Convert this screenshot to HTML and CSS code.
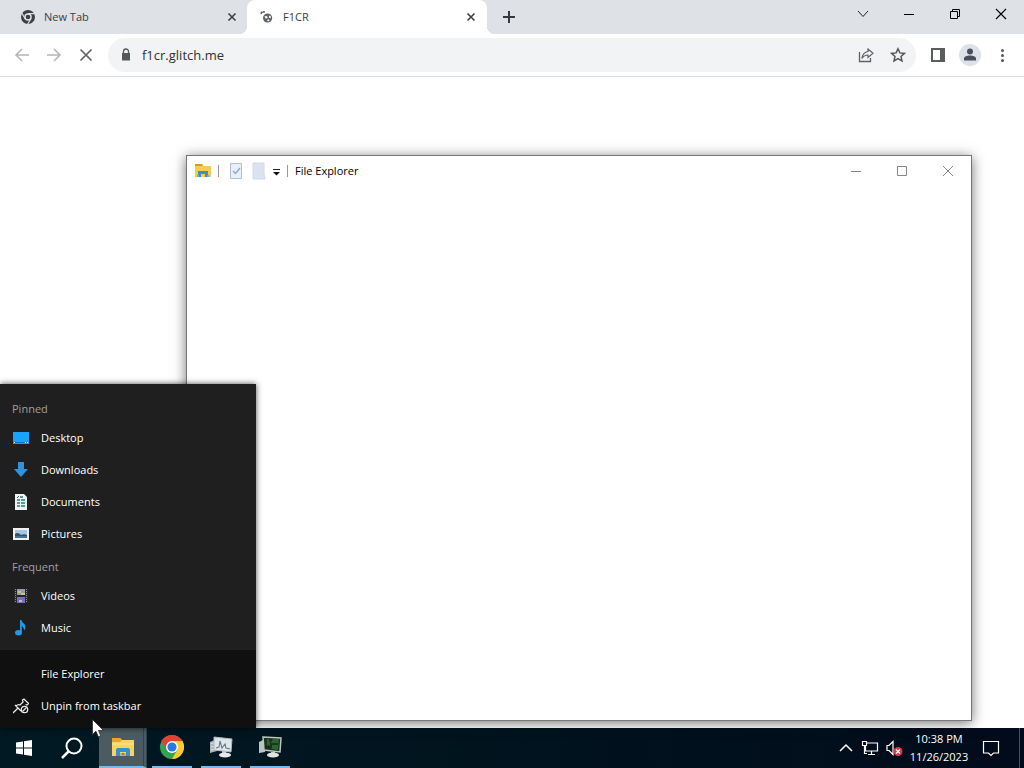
FILE: index.html
```html
<!DOCTYPE html>
<html lang="en">
<head>
<meta charset="utf-8">
<title>F1CR</title>
<link rel="stylesheet" href="styles.css">
</head>
<body>
<div class="screen">
  <main class="desktop">
    <section class="browser" aria-label="Browser">
      <div class="tabstrip">
        <div class="tab">
          <svg class="icon16" viewBox="0 0 16 16"><circle cx="8" cy="8" r="7" fill="#3c4043"/><circle cx="8" cy="8" r="3.800" fill="#dee1e6"/><circle cx="8" cy="8" r="2.300" fill="#3c4043"/><path d="M8 4.600H14.600M5.100 9.700L1.800 4M10.900 9.700L7.600 15.200" stroke="#dee1e6" stroke-width="1.200"/></svg>
          <span class="tab-title">New Tab</span>
          <button class="tab-close" aria-label="Close New Tab"><svg viewBox="0 0 16 16"><path d="M4.500 4.500l7 7M11.500 4.500l-7 7" stroke="#3c4043" stroke-width="1.600"/></svg></button>
        </div>
        <div class="tab active">
          <svg class="icon16" viewBox="0 0 16 16"><circle cx="8.600" cy="9" r="4.600" fill="#5f6368"/><path d="M5.500 7.500c1.500-1 2.500-.5 3 .5s-1 1.500-1.800 1.500zM10 6.500l2 1-.5 2-1.500-1zM8 11l2-.8.5 1.300-1.500 1z" fill="#fff"/><path d="M1.800 4.800l1.500-2M3.800 2.800h2" fill="none" stroke="#5f6368" stroke-width="1.700"/></svg>
          <span class="tab-title">F1CR</span>
          <button class="tab-close" aria-label="Close F1CR"><svg viewBox="0 0 16 16"><path d="M4.500 4.500l7 7M11.500 4.500l-7 7" stroke="#3c4043" stroke-width="1.600"/></svg></button>
        </div>
        <button class="new-tab" aria-label="New tab"><svg viewBox="0 0 16 16"><path d="M8 2v12M2 8h12" stroke="#35393c" stroke-width="2"/></svg></button>
        <div class="controls">
          <button aria-label="Search tabs"><svg viewBox="0 0 16 16"><path d="M3 5l5 5.500 5-5.500" fill="none" stroke="#222"/></svg></button>
          <button aria-label="Minimize"><svg viewBox="0 0 16 16"><path d="M3 8.500h10" stroke="#000"/></svg></button>
          <button aria-label="Restore"><svg viewBox="0 0 16 16"><path d="M3.500 5.500h7v7h-7zM5.500 5V3.500h7v7H11" fill="none" stroke="#000"/></svg></button>
          <button aria-label="Close"><svg viewBox="0 0 16 16"><path d="M3 3l10 10M13 3L3 13" stroke="#000" stroke-width="1.200"/></svg></button>
        </div>
      </div>
      <div class="toolbar">
        <button class="tool" aria-label="Back"><svg viewBox="0 0 16 16"><path d="M15 8H2M8 2L2 8l6 6" fill="none" stroke="#b5b7b9" stroke-width="1.600"/></svg></button>
        <button class="tool" aria-label="Forward"><svg viewBox="0 0 16 16"><path d="M1 8h13M8 2l6 6-6 6" fill="none" stroke="#b5b7b9" stroke-width="1.600"/></svg></button>
        <button class="tool" aria-label="Stop"><svg viewBox="0 0 16 16"><path d="M2.500 2.500l11 11M13.500 2.500l-11 11" stroke="#606366" stroke-width="1.700"/></svg></button>
        <div class="omnibox">
          <svg class="icon16" viewBox="0 0 16 16"><path d="M4 6h8v7.500H4z" fill="#55585b"/><path d="M5.500 7V4.500a2.500 2.500 0 0 1 5 0V7" fill="none" stroke="#55585b" stroke-width="1.300"/></svg>
          <input class="address" type="text" value="f1cr.glitch.me" aria-label="Address">
          <button class="tool" aria-label="Share"><svg viewBox="0 0 16 16"><path d="M1.500 5v9.500h11V11" fill="none" stroke="#5f6368" stroke-width="1.300"/><path d="M10 2l5 4.300-5 4.200V8C7.500 8 5.500 9 4 11.500 4.500 7.500 6.500 5 10 4.500z" fill="none" stroke="#5f6368" stroke-width="1.200"/></svg></button>
          <button class="tool" aria-label="Bookmark"><svg viewBox="0 0 16 16"><path d="M8 1.800l1.900 4.100 4.500.5-3.400 3 1 4.500L8 11.600l-4 2.300 1-4.500-3.400-3 4.500-.5z" fill="none" stroke="#55585b" stroke-width="1.500"/></svg></button>
        </div>
        <button class="tool side" aria-label="Side panel"><svg viewBox="0 0 16 16"><path d="M1 1h14v14H1z" fill="#5a5c5e"/><path d="M3 3h7v10H3z" fill="#fff"/></svg></button>
        <button class="tool profile" aria-label="Profile"><svg viewBox="0 0 22 22"><circle cx="11" cy="11" r="11" fill="#dde1e8"/><circle cx="11" cy="7.600" r="3" fill="#494e5a"/><path d="M5 16.500v-2c0-2 3-3 6-3s6 1 6 3v2z" fill="#494e5a"/></svg></button>
        <button class="tool" aria-label="More"><svg viewBox="0 0 16 16"><g fill="#55585b"><circle cx="8.500" cy="3.500" r="1.500"/><circle cx="8.500" cy="8.500" r="1.500"/><circle cx="8.500" cy="13.500" r="1.500"/></g></svg></button>
      </div>
    </section>

    <section class="explorer" aria-label="File Explorer">
      <div class="titlebar">
        <svg class="icon18" viewBox="0 0 18 18"><path d="M1 2h7l1 2h8v11H1z" fill="#f7cc50"/><path d="M1 2h7l1 2H1z" fill="#d99a24"/><path d="M4 15V9h10v6h-3v-3H7v3z" fill="#3c8fc7"/><path d="M3 13h2v2H3zM13 13h2v2h-2z" fill="#58b4e5"/></svg>
        <i class="divider"></i>
        <button class="quick" aria-label="Properties"><svg viewBox="0 0 16 18"><path d="M2.500 1.500h11v15h-11z" fill="#e9eff7" stroke="#b4bfcc"/><path d="M5 9l2.500 2.500L12 6" fill="none" stroke="#8fabc8" stroke-width="1.500"/></svg></button>
        <button class="quick" aria-label="New folder"><svg viewBox="0 0 16 18"><path d="M2 1h11v11l1 5H2z" fill="#dbe3f1" stroke="#d0daea"/></svg></button>
        <button class="quick narrow" aria-label="Customize"><svg viewBox="0 0 8 18"><path d="M1 7.500h7" stroke="#222"/><path d="M1 10h7l-3.500 3.500z" fill="#111"/></svg></button>
        <i class="divider"></i>
        <h1 class="window-title">File Explorer</h1>
        <div class="controls gray">
          <button aria-label="Minimize window"><svg viewBox="0 0 16 16"><path d="M3 8.500h10" stroke="#888"/></svg></button>
          <button aria-label="Maximize window"><svg viewBox="0 0 16 16"><path d="M3.500 3.500h9v9h-9z" fill="none" stroke="#888"/></svg></button>
          <button aria-label="Close window"><svg viewBox="0 0 16 16"><path d="M3 3l10 10M13 3L3 13" stroke="#888"/></svg></button>
        </div>
      </div>
    </section>

    <nav class="jumplist" aria-label="File Explorer jump list">
      <div class="places">
        <h2>Pinned</h2>
        <button><svg viewBox="0 0 16 16"><path d="M0 2h16v12H0z" fill="#18a4fa"/><path d="M1 12.500h14" stroke="#0872c4"/><path d="M1 12h1v1H1zM12 12h1v1h-1zM14 12h1v1h-1z" fill="#fff"/></svg>Desktop</button>
        <button><svg viewBox="0 0 16 16"><path d="M5 0h6v7h4l-7 8-7-8h4z" fill="#2f93df"/></svg>Downloads</button>
        <button><svg viewBox="0 0 16 16"><path d="M2 0h9l3 3v13H2z" fill="#eef2f1"/><path d="M4 6h3M8 6h4M4 9h3M8 9h4M4 12h3M8 12h4M7 3h3" stroke="#237f82" stroke-width="1.300"/><path d="M4 4l2-2" stroke="#456"/></svg>Documents</button>
        <button><svg viewBox="0 0 16 16"><path d="M0 2h16v12H0z" fill="#eef2f5"/><path d="M2 4h12v8H2z" fill="#a7c7e4"/><path d="M2 8c2-2 4-1 6 1 2-1 4-1 6 0v3H2z" fill="#2f536f"/><path d="M2 11h12" stroke="#6d91b5"/></svg>Pictures</button>
        <h2>Frequent</h2>
        <button><svg viewBox="0 0 16 16"><path d="M1 1h14v14H1z" fill="#29292b"/><path d="M2.500 1v14M13.500 1v14" stroke="#888" stroke-dasharray="1 1"/><path d="M4 1h8v6H4z" fill="#969ab0"/><path d="M4 9h8v6H4z" fill="#746fbc"/><path d="M5 3h3v2H5zM8 5h4v2H8zM6 12h3v2H6z" fill="#c9c383"/><path d="M4 7.500h8" stroke="#222"/></svg>Videos</button>
        <button><svg viewBox="0 0 16 16"><ellipse cx="5.500" cy="12.700" rx="3.500" ry="2.700" fill="#1c9bea"/><path d="M7 0h1.500c0 3 4 3.500 4 7 0 1.500-.7 2.500-1.500 3.500 0-2.500-1-3.800-2.200-4.500v7H7z" fill="#1c9bea"/></svg>Music</button>
      </div>
      <div class="actions">
        <button><svg viewBox="0 0 16 16"></svg>File Explorer</button>
        <button><svg viewBox="0 0 16 16"><g fill="none" stroke="#e8e8e8" stroke-width="1.300"><path d="M0 15l5-5M2 7l6 6M3 8c1.500-1.500 3-1.500 4-1l3-3-.5-2L11 1l4.500 4.500L14 7l-1.500-.5"/><circle cx="11.500" cy="11.500" r="3.200"/><path d="M9.500 13.500l4-4"/></g></svg>Unpin from taskbar</button>
      </div>
    </nav>
  </main>

  <footer class="taskbar">
    <button class="system" aria-label="Start"><svg class="icon18" viewBox="0 0 18 18"><path d="M1 3.500L8 2.500v6H1zM9 2.300L17 1v7.500H9zM1 9.500h7v6l-7-1zM9 9.500h8V17l-8-1.200z" fill="#fff"/></svg></button>
    <button class="system" aria-label="Search"><svg class="icon24" viewBox="0 0 24 24"><circle cx="14" cy="10" r="7.500" fill="none" stroke="#fff" stroke-width="2"/><path d="M8.500 15.500L2 22" stroke="#fff" stroke-width="2.500"/></svg></button>
    <div class="apps">
      <button class="app current" aria-label="File Explorer"><svg class="icon24" viewBox="0 0 24 24"><path d="M1 3h8l2 2h12v16H1z" fill="#fad365"/><path d="M1 3h8l2 2-2 2H1z" fill="#e7a72c"/><path d="M1 8h22v2H1z" fill="#ffdd77"/><path d="M5 21v-6q0-2 2-2h10q2 0 2 2v6h-4v-4H9v4z" fill="#3791cd"/><path d="M9 18h6v3H9z" fill="#e6ad36"/><path d="M11 18h2v2h-2z" fill="#3791cd"/></svg></button>
      <button class="app" aria-label="Google Chrome"><svg class="icon24" viewBox="0 0 24 24"><circle cx="12" cy="12" r="12" fill="#32a350"/><path d="M1.600 6A12 12 0 0 1 22.400 6H12L6.800 15z" fill="#e34133"/><path d="M22.400 6A12 12 0 0 1 12 24l5.200-9L12 6z" fill="#fbca2f"/><circle cx="12" cy="12" r="6" fill="#fff"/><circle cx="12" cy="12" r="4.600" fill="#2879e8"/></svg></button>
      <button class="app" aria-label="System monitor"><svg class="icon24" viewBox="0 0 24 24"><path d="M1 7l7-3v12l-7 2z" fill="#aeb5b9"/><path d="M2 9l4-2M2 12l4-1M2 15l4-1" stroke="#e1e5e7"/><path d="M5 2l18 2-1 13-17-2z" fill="#dfe6e9" stroke="#aebabd"/><path d="M7 13l3-1 1-6 2 7 3-4 1 4 4 1" fill="none" stroke="#627b93" stroke-width="1.100"/><path d="M13 16h4v4h-4z" fill="#bac3c5"/><ellipse cx="16" cy="20" rx="6" ry="2.500" fill="#e5eaeb"/></svg></button>
      <button class="app" aria-label="Display console"><svg class="icon24" viewBox="0 0 24 24"><path d="M1 7l6-3v13l-6 1z" fill="#bdc5c2"/><path d="M5 2l18 1-1 14-16-2z" fill="#18321d" stroke="#bbc7bd" stroke-width="1.500"/><path d="M7 4h4l1 5 3-5h6l-1 11-6-1-3-4-4 2z" fill="#2d6332"/><path d="M8 4v8h5v-3h7" fill="none" stroke="#132b17" stroke-width="1.500"/><path d="M13 17h4v3h-4z" fill="#bdc6c1"/><ellipse cx="15" cy="20" rx="6" ry="2.500" fill="#e1e7df"/></svg></button>
    </div>
    <div class="tray">
      <button aria-label="Show hidden icons"><svg class="icon18" viewBox="0 0 18 18"><path d="M3 12l6-6 6 6" fill="none" stroke="#fff" stroke-width="1.500"/></svg></button>
      <button aria-label="Network"><svg class="icon18" viewBox="0 0 18 18"><g fill="none" stroke="#fff" stroke-width="1.200"><path d="M6 4h10.500v8H4.500V7M10.500 12v3.500M7 15.500h7"/><path d="M1.500 2.500h4v4h-4zM3.500 6.500v8H6"/></g></svg></button>
      <button aria-label="Volume"><svg class="icon18" viewBox="0 0 18 18"><path d="M2 6.500h2l4-4v13l-4-4H2z" fill="none" stroke="#fff" stroke-width="1.200"/><circle cx="13" cy="12.500" r="4.500" fill="#d83b43"/><path d="M11 10.500l4 4M15 10.500l-4 4" stroke="#fff" stroke-width="1.200"/></svg></button>
      <button class="clock"><time>10:38 PM</time><time>11/26/2023</time></button>
      <button class="notice" aria-label="Notifications"><svg class="icon18" viewBox="0 0 18 18"><path d="M1.500 2.500h15v11.500h-5L9 16.500 6.500 14h-5z" fill="none" stroke="#fff" stroke-width="1.200"/></svg></button>
      <button class="peek" aria-label="Show desktop"></button>
    </div>
  </footer>
  <svg class="pointer" viewBox="0 0 12 19"><path d="M.5.5v15l3.500-3.300 2.300 5.600 2.400-1L6.500 11.500h5z" fill="#fff" stroke="#222" stroke-width=".7"/></svg>
</div>
</body>
</html>
```
FILE: styles.css
```css
* { box-sizing: border-box; }

body {
  margin: 0;
  background: #fff;
  font: 11px/16px "Open Sans", "Noto Sans", sans-serif;
}

button {
  display: flex;
  align-items: center;
  justify-content: center;
  flex: none;
  margin: 0;
  padding: 0;
  border: 0;
  background: none;
  color: inherit;
  font: inherit;
}

svg { display: block; flex: none; width: 16px; height: 16px; }
h1, h2 { margin: 0; font: inherit; }

.icon18 { width: 18px; height: 18px; }
.icon24 { width: 24px; height: 24px; }

.screen {
  position: relative;
  display: flex;
  flex-direction: column;
  height: 100vh;
  overflow: hidden;
}

.desktop { position: relative; flex: 1; }

.tabstrip { display: flex; height: 34px; background: #dee1e6; }

.tab {
  display: flex;
  align-items: center;
  gap: 8px;
  flex: 0 1 247px;
  padding: 0 7px 0 20px;
  color: #3c4043;
}

.tab.active {
  position: relative;
  flex-basis: 240px;
  padding: 0 8px 0 12px;
  border-radius: 8px 8px 0 0;
  background: #fff;
}

.tab.active::before,
.tab.active::after {
  content: "";
  position: absolute;
  bottom: 0;
  width: 8px;
  height: 8px;
}

.tab.active::before {
  left: -8px;
  background: radial-gradient(circle at 0 0, #dee1e6 8px, #fff 8px);
}

.tab.active::after {
  right: -8px;
  background: radial-gradient(circle at 100% 0, #dee1e6 8px, #fff 8px);
}

.tab-title { flex: 1; }
.new-tab { width: 44px; }

.controls { display: flex; margin-left: auto; }
.controls button { width: 46px; height: 28px; }

.toolbar {
  display: flex;
  align-items: center;
  height: 43px;
  padding: 0 6px;
  border-bottom: 1px solid #dcdee1;
  background: #fff;
}

.tool { width: 32px; height: 32px; }

.omnibox {
  display: flex;
  align-items: center;
  flex: 1;
  height: 34px;
  margin-left: 6px;
  padding: 0 2px 0 10px;
  border-radius: 17px;
  background: #f1f3f4;
}

.address {
  flex: 1;
  min-width: 0;
  padding: 0 8px;
  border: 0;
  outline: 0;
  background: none;
  color: #303235;
  font: 13px/20px "Open Sans", "Noto Sans", sans-serif;
}

.side { margin-left: 6px; }
.profile svg { width: 22px; height: 22px; }

.explorer {
  position: absolute;
  inset: 155px 52px 7px 186px;
  border: 1px solid #777;
  background: #fff;
  box-shadow: 0 2px 12px rgba(0, 0, 0, .55);
}

.titlebar {
  display: flex;
  align-items: center;
  height: 29px;
  padding-left: 7px;
}

.divider { width: 1px; height: 12px; margin: 0 6px 0 5px; background: #999; }
.icon18 + .divider { margin-left: 6px; margin-right: 5px; }
.quick { width: 23px; height: 24px; }
.quick svg { height: 18px; }
.quick.narrow { width: 12px; }
.quick.narrow svg { width: 8px; }
.window-title { padding-left: 1px; color: #000; }

.jumplist {
  position: absolute;
  bottom: 0;
  left: 0;
  width: 256px;
  background: #1f1f1f;
  color: #fff;
  box-shadow: 0 0 6px rgba(0, 0, 0, .7);
}

.places { padding: 8px 0 6px; }
.places h2 { height: 30px; padding: 9px 12px 0; color: #a0a0a0; }
.actions { padding: 8px 0 6px; background: #101010; }

.jumplist button {
  justify-content: flex-start;
  gap: 12px;
  width: 100%;
  height: 32px;
  padding: 0 13px;
}

.taskbar {
  display: flex;
  height: 40px;
  background: linear-gradient(90deg, #001923, #00141e 45%, #020b1b);
  color: #fff;
}

.system { width: 48px; }
.apps { display: flex; gap: 9px; padding-left: 7px; }

.app {
  width: 40px;
  border-bottom: 2px solid #76b9ed;
}

.app.current {
  width: 48px;
  margin-left: -4px;
  margin-right: -4px;
  padding-left: 4px;
  border-right: 4px double #30454e;
  background: #4a5b62;
}

.tray { display: flex; margin-left: auto; }
.tray button { width: 24px; }
.tray .clock { flex-direction: column; width: 66px; line-height: 18px; }
.tray .notice { width: 38px; margin-right: 9px; }
.tray .peek { width: 5px; border-left: 1px solid #46505b; }

.pointer {
  position: absolute;
  left: 92px;
  bottom: 30px;
  width: 12px;
  height: 19px;
}
```
